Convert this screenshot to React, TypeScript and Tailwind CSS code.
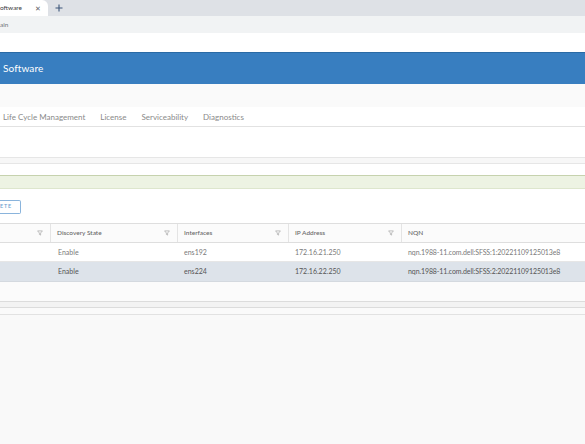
import React from "react";

function Funnel() {
  return (
    <svg width="6" height="6" viewBox="0 0 10 10" className="shrink-0">
      <path d="M1 1.5 H9 L6 5 V8.5 L4 7.5 V5 Z" fill="none" stroke="#a8a8a8" strokeWidth="1.2" strokeLinejoin="round" />
    </svg>
  );
}

const rows = [
  { state: "Enable", iface: "ens192", ip: "172.16.21.250", nqn: "nqn.1988-11.com.dell:SFSS:1:20221109125013e8", sel: false },
  { state: "Enable", iface: "ens224", ip: "172.16.22.250", nqn: "nqn.1988-11.com.dell:SFSS:2:20221109125013e8", sel: true },
];

export default function App() {
  return (
    <div className="w-[585px] h-[444px] overflow-hidden bg-[#f8f8f8] flex flex-col font-['Lato',sans-serif]">
      {/* browser tab strip */}
      <div className="h-[16px] bg-[#dee1e6] flex items-end shrink-0">
        <div className="h-[16px] w-[48px] bg-white rounded-tr-[6px] flex items-center">
          <span className="text-[6.5px] text-[#3c4043] whitespace-nowrap">oftware</span>
          <span className="ml-auto mr-[7px] text-[7px] text-[#5f6368] leading-none">✕</span>
        </div>
        <div className="h-[16px] flex items-center ml-[7px]">
          <svg width="8" height="8" viewBox="0 0 8 8">
            <path d="M4 0.5 V7.5 M0.5 4 H7.5" stroke="#3b5578" strokeWidth="1.1" />
          </svg>
        </div>
      </div>
      {/* toolbar */}
      <div className="h-[17px] bg-[#f1f3f4] flex items-center shrink-0">
        <span className="text-[6.5px] text-[#70757a]">ain</span>
      </div>
      <div className="h-[19px] bg-white shrink-0" />
      {/* app header */}
      <div className="h-[32px] bg-[#387ec0] border-t border-[#2a6aa5] flex items-center shrink-0">
        <span className="text-[10px] text-white pl-[3px] tracking-[0.1px]">Software</span>
      </div>
      <div className="h-[23px] bg-[#fafafa] shrink-0" />
      {/* tabs */}
      <div className="h-[20px] bg-white border-b border-[#e2e2e2] flex items-center gap-[15px] pl-[3px] shrink-0 text-[8px] text-[#8a8a8a]">
        <span>Life Cycle Management</span>
        <span>License</span>
        <span>Serviceability</span>
        <span>Diagnostics</span>
      </div>
      <div className="h-[31px] bg-white border-b border-[#e6e6e6] shrink-0" />
      <div className="h-[6px] bg-[#f7f7f7] border-b border-[#e6e6e6] shrink-0" />
      <div className="h-[11px] bg-white shrink-0" />
      {/* alert */}
      <div className="h-[14px] bg-[#edf3e3] border-t border-[#c6d2ae] border-b border-b-[#dde6cd] shrink-0" />
      {/* actions */}
      <div className="h-[34px] bg-white flex items-center shrink-0">
        <div className="h-[14px] w-[21px] mt-[1px] border border-[#8ab4dc] border-l-0 rounded-r-[2px] flex items-center">
          <span className="text-[5.5px] text-[#6e9fd0] font-semibold tracking-[0.8px]">ETE</span>
        </div>
      </div>
      {/* table */}
      <div className="bg-white shrink-0 text-[7px]">
        <div className="h-[20px] flex items-center border-t border-b border-[#dedede] bg-[#fbfbfb] text-[6.5px] text-[#666] font-medium">
          <div className="w-[51px] h-full flex items-center justify-end pr-[7px] border-r border-[#e4e4e4]"><Funnel /></div>
          <div className="w-[127px] h-full flex items-center pl-[6px] pr-[7px] border-r border-[#e4e4e4]"><span className="flex-1">Discovery State</span><Funnel /></div>
          <div className="w-[111px] h-full flex items-center pl-[6px] pr-[7px] border-r border-[#e4e4e4]"><span className="flex-1">Interfaces</span><Funnel /></div>
          <div className="w-[113px] h-full flex items-center pl-[6px] pr-[7px] border-r border-[#e4e4e4]"><span className="flex-1">IP Address</span><Funnel /></div>
          <div className="flex-1 h-full flex items-center pl-[6px]">NQN</div>
        </div>
        {rows.map((r, i) => (
          <div key={i} className={`flex items-center border-b ${r.sel ? "h-[20px] bg-[#dde3ea] text-[#555] border-[#d4d9df]" : "h-[19px] bg-white text-[#7a7a7a] border-[#e6e6e6]"}`}>
            <div className="w-[51px]" />
            <div className="w-[127px] pl-[7px]">{r.state}</div>
            <div className="w-[111px] pl-[6px]">{r.iface}</div>
            <div className="w-[113px] pl-[6px]">{r.ip}</div>
            <div className="flex-1 pl-[6px] whitespace-nowrap tracking-[-0.1px]">{r.nqn}</div>
          </div>
        ))}
        <div className="h-[20px] bg-[#fbfbfb] border-b border-[#dcdcdc]" />
      </div>
      <div className="h-[6px] bg-[#f3f3f3] border-b border-[#dcdcdc] shrink-0" />
      <div className="h-[7px] bg-[#fafafa] border-b border-[#e2e2e2] shrink-0" />
      <div className="flex-1 bg-[#f9f9f9]" />
    </div>
  );
}
